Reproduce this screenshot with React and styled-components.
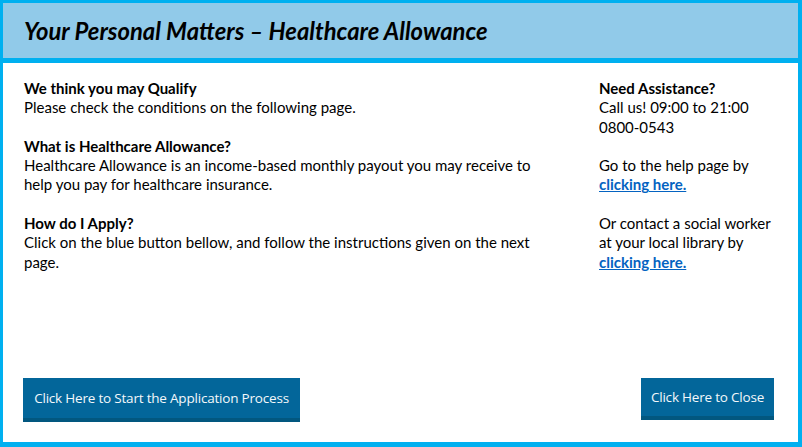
import React from "react"
import styled, {createGlobalStyle} from "styled-components"

const GlobalStyle = createGlobalStyle`
  html, body {
    margin: 0;
    padding: 0;
    background: #fff;
  }
`

const Frame = styled.div`
  width: 802px;
  height: 447px;
  box-sizing: border-box;
  border-style: solid;
  border-color: #00b0f0;
  border-width: 3px 4px 5px 3px;
  display: flex;
  flex-direction: column;
  font-family: Lato, "Open Sans", sans-serif;
  color: #000;
`

const Header = styled.div`
  height: 55px;
  background: #91cae9;
  border-bottom: 5px solid #00b0f0;
  display: flex;
  align-items: center;
  padding-left: 21px;

  & h1 {
    margin: 0;
    font-size: 23.8px;
    font-style: italic;
    font-weight: 700;
  }
`

const Body = styled.div`
  flex: 1;
  display: flex;
  flex-direction: column;
  padding: 16px 24px 20px 21px;
`

const Columns = styled.div`
  flex: 1;
  display: flex;
  justify-content: space-between;
  padding-right: 3px;
`

const Main = styled.div`
  width: 508px;
`

const Aside = styled.div`
  width: 172px;
`

const Block = styled.p`
  margin: 0 0 19.3px 0;
  font-size: 15px;
  line-height: 19.3px;

  & b {
    font-weight: 700;
    display: block;
  }
`

const Link = styled.a`
  color: #0563c1;
  font-weight: 700;
  text-decoration: underline;
`

const Footer = styled.div`
  display: flex;
  justify-content: space-between;
  align-items: flex-start;
  margin-left: -1px;
`

const Button = styled.button`
  width: ${p => p.$w}px;
  height: ${p => p.$h}px;
  padding: 0;
  border: none;
  border-bottom: 4px solid #02577f;
  background: #03669a;
  color: #f4f8fb;
  font-family: "Open Sans", Lato, sans-serif;
  font-size: 13.5px;
  letter-spacing: -0.2px;
  cursor: pointer;
`

const App = () => {
  return (
    <>
      <GlobalStyle/>
      <Frame>
        <Header>
          <h1>Your Personal Matters – Healthcare Allowance</h1>
        </Header>
        <Body>
          <Columns>
            <Main>
              <Block>
                <b>We think you may Qualify</b>
                Please check the conditions on the following page.
              </Block>
              <Block>
                <b>What is Healthcare Allowance?</b>
                Healthcare Allowance is an income-based monthly payout you may receive to help you pay for healthcare insurance.
              </Block>
              <Block>
                <b>How do I Apply?</b>
                Click on the blue button bellow, and follow the instructions given on the next page.
              </Block>
            </Main>
            <Aside>
              <Block>
                <b>Need Assistance?</b>
                Call us! 09:00 to 21:00<br/>0800-0543
              </Block>
              <Block>
                Go to the help page by <Link href="#">clicking here.</Link>
              </Block>
              <Block>
                Or contact a social worker at your local library by <Link href="#">clicking here.</Link>
              </Block>
            </Aside>
          </Columns>
          <Footer>
            <Button $w={277} $h={44}>Click Here to Start the Application Process</Button>
            <Button $w={133} $h={42}>Click Here to Close</Button>
          </Footer>
        </Body>
      </Frame>
    </>
  )
}

export default App
